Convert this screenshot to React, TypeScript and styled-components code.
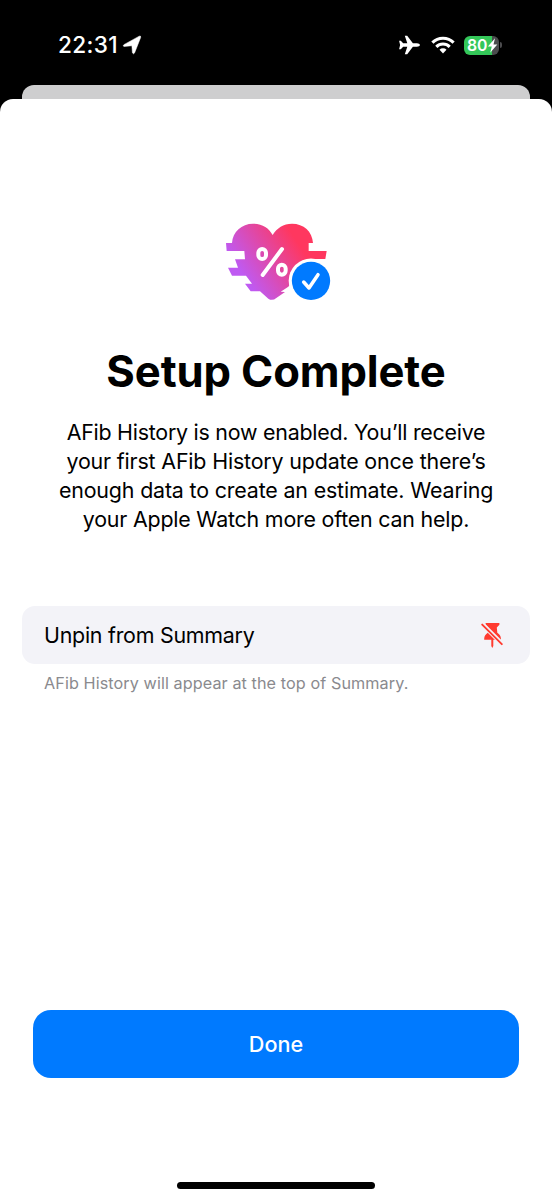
import React from "react";
import styled, { createGlobalStyle } from "styled-components";

const GlobalStyle = createGlobalStyle`
  * { box-sizing: border-box; }
  body { margin: 0; background: #000; font-family: Inter, "Liberation Sans", sans-serif; }
`;

const Screen = styled.main`
  width: 552px;
  height: 1200px;
  display: flex;
  flex-direction: column;
  background: #000;
  overflow: hidden;
`;

const StatusBar = styled.header`
  height: 85px;
  flex: none;
  display: flex;
  justify-content: space-between;
  align-items: flex-start;
  padding: 30px 50px 0 58px;
  color: #fff;
`;

const StatusGroup = styled.div<{ $gap: number }>`
  display: flex;
  align-items: center;
  height: 30px;
  gap: ${(p) => p.$gap}px;
`;

const Clock = styled.span`
  font-size: 22.6px;
  line-height: 30px;
  font-weight: 550;
  letter-spacing: 0.35px;
`;

const Battery = styled.div`
  display: flex;
  align-items: center;
  gap: 1px;
  margin-left: -1px;
`;

const BatteryBody = styled.div`
  width: 35px;
  height: 19px;
  border-radius: 6px;
  display: flex;
  align-items: center;
  padding-left: 3px;
  background: linear-gradient(90deg, #34c759 79%, #4b4b4d 79%);
`;

const BatteryLevel = styled.span`
  font-size: 15.8px;
  line-height: 19px;
  font-weight: 600;
  letter-spacing: -0.1px;
`;

const BatteryCap = styled.span`
  width: 2px;
  height: 6px;
  border-radius: 0 3px 3px 0;
  background: #4b4b4d;
`;

const BackCard = styled.div`
  height: 14px;
  flex: none;
  margin: 0 22px;
  border-radius: 12px 12px 0 0;
  background: #cececf;
`;

const SheetArea = styled.div`
  flex: 1;
  display: flex;
  background: #000;
`;

const Sheet = styled.section`
  flex: 1;
  display: flex;
  flex-direction: column;
  align-items: center;
  padding: 111px 22px 0;
  border-radius: 13px 13px 0 0;
  background: #fff;
`;

const Artwork = styled.svg`
  width: 125px;
  height: 100px;
  margin-left: 3px;
  flex: none;
`;

const Title = styled.h1`
  margin: 35px 0 0;
  font-size: 43.6px;
  line-height: 54px;
  font-weight: 700;
  letter-spacing: -0.12px;
  color: #000;
  white-space: nowrap;
`;

const Description = styled.p`
  margin: 19px 0 0;
  display: flex;
  flex-direction: column;
  align-items: center;
  font-size: 21.4px;
  line-height: 29px;
  color: #000;
`;

const Line = styled.span<{ $tracking: number }>`
  white-space: nowrap;
  letter-spacing: ${(p) => p.$tracking}px;
`;

const PinRow = styled.div`
  width: 508px;
  height: 58px;
  margin-top: 72.4px;
  padding: 0 25px 1px 22px;
  display: flex;
  align-items: center;
  justify-content: space-between;
  border-radius: 13px;
  background: #f3f3f8;
  font-size: 21.4px;
  letter-spacing: -0.25px;
`;

const Footnote = styled.p`
  margin: 7.6px 0 0;
  padding-left: 22px;
  align-self: flex-start;
  font-size: 16.2px;
  line-height: 22px;
  letter-spacing: 0.085px;
  color: #8a8a8e;
`;

const DoneButton = styled.button`
  width: 486px;
  height: 68px;
  margin: auto 0 0;
  border: 0;
  border-radius: 18px;
  background: #007aff;
  color: #fff;
  font-family: inherit;
  font-size: 21.6px;
  font-weight: 550;
  letter-spacing: 0;
`;

const HomeIndicator = styled.div`
  width: 198px;
  height: 7px;
  margin: 104px 0 11px;
  flex: none;
  border-radius: 4px;
  background: #000;
`;

const LocationIcon = () => (
  <svg width="20" height="20" viewBox="0 0 19 19">
    <path
      d="M1.8 9.2 16.4 1.1q1.7-.6 1.3 1.2L12 16.9q-1 1.9-2.1 0L9.4 10.2 1.9 10.9q-1.6-.5-.1-1.7Z"
      fill="#fff"
      stroke="#fff"
      strokeWidth="0.5"
    />
  </svg>
);

const AirplaneIcon = () => (
  <svg width="23" height="20" viewBox="0.3 0 22 20">
    <path
      d="M21.7 10c0 1-1.4 1.7-3 1.7h-4L9 19.2H6.6l2.5-7.5H5L2.6 14.2H.9L1.9 10l-1-4.2h1.7L5 8.3h4.1L6.6.8H9l5.7 7.5h4c1.6 0 3 .7 3 1.7Z"
      fill="#fff"
    />
  </svg>
);

const WifiIcon = () => (
  <svg width="24" height="18" viewBox="0 0 24 18">
    <g fill="none" stroke="#fff" strokeWidth="3.1">
      <path d="M1.4 6.6a15 15 0 0 1 21.2 0" />
      <path d="M5.3 10.8a9.5 9.5 0 0 1 13.4 0" />
    </g>
    <path d="M8.5 13.8a4.9 4.9 0 0 1 7 0L12 17.4Z" fill="#fff" />
  </svg>
);

const BoltIcon = () => (
  <svg width="11" height="15" viewBox="0 0 11 15">
    <path d="M8 .3.9 8.4h3.9L3.2 14.7 10.3 6.4H6.5Z" fill="#fff" />
  </svg>
);

const HeartArtwork = () => (
  <Artwork viewBox="0 0 375 300">
    <defs>
      <linearGradient id="heart" gradientUnits="userSpaceOnUse" x1="90" y1="205" x2="250" y2="100">
        <stop offset="0" stopColor="#bf5af2" />
        <stop offset="1" stopColor="#ff375f" />
      </linearGradient>
    </defs>
    <path
      d="M33 99H51C53 65 80 41 114 41C142 41 162 54 173 75C186 54 205 41 231 41C266 41 292 64 294 99H281V123H335L331 147H285L240 205L220 230L197 245L210 246L184 264Q172 274 160 266L135 244H107L90 221H111L93 197H51L39 173H69L60 148H90L88 123H35Z"
      fill="url(#heart)"
    />
    <g fill="none" stroke="#fff" strokeWidth="12" strokeLinecap="round">
      <path d="M201 117 143 195" />
      <rect x="130" y="117" width="23" height="30" rx="11.5" />
      <rect x="189" y="164" width="23" height="30" rx="11.5" />
    </g>
    <circle cx="288" cy="212.5" r="67" fill="#fff" />
    <circle cx="288" cy="212.5" r="57.5" fill="#007aff" />
    <path d="M266 216 282 234 309 194" fill="none" stroke="#fff" strokeWidth="10.5" strokeLinecap="round" strokeLinejoin="round" />
  </Artwork>
);

const PinSlashIcon = () => (
  <svg width="24" height="28" viewBox="0 0 24 28">
    <path
      d="M4.6 2h13.8v1.8l-2.6 2.7.5 5.2q3.4 2.1 3.6 5.8v1.2h-7.6v6.2l-1 2-1-2v-6.2H3.2v-1.2q.2-3.7 3.6-5.8l.5-5.2-2.7-2.7Z"
      fill="#ff3b30"
    />
    <path d="M1 2.8 21.8 23.6" stroke="#f3f3f8" strokeWidth="4.4" />
    <path d="M1.2 3.6 20.8 23.2" stroke="#ff3b30" strokeWidth="1.9" strokeLinecap="round" />
  </svg>
);

const description = [
  { text: "AFib History is now enabled. You’ll receive", tracking: -0.24 },
  { text: "your first AFib History update once there’s", tracking: -0.16 },
  { text: "enough data to create an estimate. Wearing", tracking: -0.16 },
  { text: "your Apple Watch more often can help.", tracking: -0.2 },
];

export default function App() {
  return (
    <Screen>
      <GlobalStyle />
      <StatusBar>
        <StatusGroup $gap={4}>
          <Clock>22:31</Clock>
          <LocationIcon />
        </StatusGroup>
        <StatusGroup $gap={10}>
          <AirplaneIcon />
          <WifiIcon />
          <Battery>
            <BatteryBody>
              <BatteryLevel>80</BatteryLevel>
              <BoltIcon />
            </BatteryBody>
            <BatteryCap />
          </Battery>
        </StatusGroup>
      </StatusBar>
      <BackCard />
      <SheetArea>
        <Sheet>
          <HeartArtwork />
          <Title>Setup Complete</Title>
          <Description>
            {description.map((line) => (
              <Line key={line.text} $tracking={line.tracking}>
                {line.text}
              </Line>
            ))}
          </Description>
          <PinRow>
            Unpin from Summary
            <PinSlashIcon />
          </PinRow>
          <Footnote>AFib History will appear at the top of Summary.</Footnote>
          <DoneButton>Done</DoneButton>
          <HomeIndicator />
        </Sheet>
      </SheetArea>
    </Screen>
  );
}
